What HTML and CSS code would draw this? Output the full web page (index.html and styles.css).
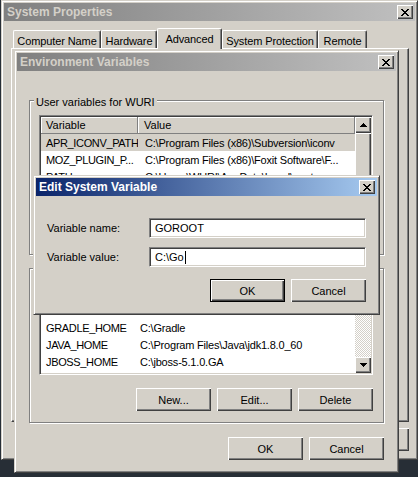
FILE: index.html
```html
<!DOCTYPE html>
<html>
<head>
<meta charset="utf-8">
<title>System Properties</title>
<link rel="stylesheet" href="styles.css">
</head>
<body>
<div class="desktop">

  <div class="win sysprops">
    <div class="titlebar inactive">
      <span class="title">System Properties</span>
      <span class="close"><svg width="8" height="7" viewBox="0 0 8 7" shape-rendering="crispEdges"><path d="M0 0h2v1h-2zM6 0h2v1h-2zM1 1h2v1h-2zM5 1h2v1h-2zM2 2h4v1h-4zM3 3h2v1h-2zM2 4h4v1h-4zM1 5h2v1h-2zM5 5h2v1h-2zM0 6h2v1h-2zM6 6h2v1h-2z" fill="#000"/></svg></span>
    </div>
    <div class="tabs">
      <div class="tab t-cn">Computer Name</div>
      <div class="tab t-hw">Hardware</div>
      <div class="tab t-adv selected">Advanced</div>
      <div class="tab t-sp">System Protection</div>
      <div class="tab t-rm">Remote</div>
    </div>
    <div class="tabpanel"></div>
    <div class="btnrow sp-buttons">
      <span class="btn">OK</span><span class="btn">Cancel</span><span class="btn">Apply</span>
    </div>
  </div>

  <div class="win envvars">
    <div class="titlebar inactive">
      <span class="title">Environment Variables</span>
      <span class="close"><svg width="8" height="7" viewBox="0 0 8 7" shape-rendering="crispEdges"><path d="M0 0h2v1h-2zM6 0h2v1h-2zM1 1h2v1h-2zM5 1h2v1h-2zM2 2h4v1h-4zM3 3h2v1h-2zM2 4h4v1h-4zM1 5h2v1h-2zM5 5h2v1h-2zM0 6h2v1h-2zM6 6h2v1h-2z" fill="#000"/></svg></span>
    </div>
    <div class="env-body">
      <div class="group">
        <span class="group-label">User variables for WURI</span>
        <div class="list">
          <div class="lv">
            <div class="lv-header"><div class="hcell c1">Variable</div><div class="hcell c2">Value</div></div>
            <div class="row sel"><div class="c1">APR_ICONV_PATH</div><div class="c2">C:\Program Files (x86)\Subversion\iconv</div></div>
            <div class="row"><div class="c1">MOZ_PLUGIN_P...</div><div class="c2">C:\Program Files (x86)\Foxit Software\F...</div></div>
            <div class="row"><div class="c1">PATH</div><div class="c2">C:\Users\WURI\AppData\Local\.meteor;</div></div>
            <div class="row"><div class="c1">TEMP</div><div class="c2">%USERPROFILE%\AppData\Local\Temp</div></div>
          </div>
          <div class="scrollbar">
            <span class="sbtn"><svg width="7" height="4" viewBox="0 0 7 4" shape-rendering="crispEdges"><path d="M3 0h1v1h1v1h1v1h1v1h-7v-1h1v-1h1v-1h1z" fill="#000"/></svg></span>
            <span class="thumb"></span>
            <span class="track"></span>
            <span class="sbtn"><svg width="7" height="4" viewBox="0 0 7 4" shape-rendering="crispEdges"><path d="M0 0h7v1h-1v1h-1v1h-1v1h-1v-1h-1v-1h-1v-1h-1z" fill="#000"/></svg></span>
          </div>
        </div>
        <div class="btnrow group-buttons">
          <span class="btn">New...</span><span class="btn">Edit...</span><span class="btn">Delete</span>
        </div>
      </div>

      <div class="group">
        <span class="group-label">System variables</span>
        <div class="list sys">
          <div class="lv">
            <div class="lv-header"><div class="hcell c1">Variable</div><div class="hcell c2">Value</div></div>
            <div class="row"><div class="c1">CLASSPATH</div><div class="c2">C:\Java\lib</div></div>
            <div class="row"><div class="c1">GRADLE_HOME</div><div class="c2">C:\Gradle</div></div>
            <div class="row"><div class="c1">JAVA_HOME</div><div class="c2">C:\Program Files\Java\jdk1.8.0_60</div></div>
            <div class="row"><div class="c1">JBOSS_HOME</div><div class="c2">C:\jboss-5.1.0.GA</div></div>
            <div class="row"><div class="c1">MAVEN_HOME</div><div class="c2">C:\apache-maven-3.3.9</div></div>
          </div>
          <div class="scrollbar">
            <span class="sbtn"><svg width="7" height="4" viewBox="0 0 7 4" shape-rendering="crispEdges"><path d="M3 0h1v1h1v1h1v1h1v1h-7v-1h1v-1h1v-1h1z" fill="#000"/></svg></span>
            <span class="thumb small"></span>
            <span class="track"></span>
            <span class="sbtn"><svg width="7" height="4" viewBox="0 0 7 4" shape-rendering="crispEdges"><path d="M0 0h7v1h-1v1h-1v1h-1v1h-1v-1h-1v-1h-1v-1h-1z" fill="#000"/></svg></span>
          </div>
        </div>
        <div class="btnrow group-buttons">
          <span class="btn">New...</span><span class="btn">Edit...</span><span class="btn">Delete</span>
        </div>
      </div>

      <div class="btnrow env-buttons">
        <span class="btn">OK</span><span class="btn">Cancel</span>
      </div>
    </div>
  </div>

  <div class="win editvar">
    <div class="titlebar active">
      <span class="title">Edit System Variable</span>
      <span class="close"><svg width="8" height="7" viewBox="0 0 8 7" shape-rendering="crispEdges"><path d="M0 0h2v1h-2zM6 0h2v1h-2zM1 1h2v1h-2zM5 1h2v1h-2zM2 2h4v1h-4zM3 3h2v1h-2zM2 4h4v1h-4zM1 5h2v1h-2zM5 5h2v1h-2zM0 6h2v1h-2zM6 6h2v1h-2z" fill="#000"/></svg></span>
    </div>
    <div class="edit-body">
      <div class="field">
        <span class="flabel">Variable name:</span>
        <span class="textbox">GOROOT</span>
      </div>
      <div class="field">
        <span class="flabel">Variable value:</span>
        <span class="textbox">C:\Go<span class="caret"></span></span>
      </div>
      <div class="btnrow edit-buttons">
        <span class="btn default">OK</span><span class="btn">Cancel</span>
      </div>
    </div>
  </div>

</div>
</body>
</html>
```

FILE: styles.css
```css
* { box-sizing: border-box; margin: 0; padding: 0; }

html, body { width: 418px; height: 477px; overflow: hidden; }

body {
  background: #272e36;
  font: 11px "Liberation Sans", Arial, sans-serif;
  color: #000;
}

.desktop { position: relative; width: 418px; height: 477px; }

/* classic window frame */
.win {
  position: absolute;
  background: #d4d0c8;
  border: 1px solid;
  border-color: #d4d0c8 #404040 #404040 #d4d0c8;
  box-shadow: inset 1px 1px #fff, inset -1px -1px #808080;
  padding: 2px;
  display: flex;
  flex-direction: column;
}

.sysprops { left: 1px; top: 0; width: 417px; height: 460px; }
.envvars { left: 14px; top: 50px; width: 385px; height: 423px; }
.editvar { left: 33px; top: 175px; width: 347px; height: 140px; }

.titlebar {
  flex: none;
  height: 18px;
  display: flex;
  align-items: center;
  justify-content: space-between;
  padding: 0 2px 0 3px;
}
.titlebar.inactive { background: linear-gradient(to right, #808080, #c0c0c0); color: #d4d0c8; }
.titlebar.active { background: linear-gradient(to right, #0a246a, #a6caf0); color: #fff; }
.title { font-weight: bold; font-size: 12px; white-space: nowrap; }

.close {
  width: 16px;
  height: 14px;
  display: flex;
  align-items: center;
  justify-content: center;
  background: #d4d0c8;
  box-shadow: inset 1px 1px #fff, inset -1px -1px #404040, inset -2px -2px #808080;
}
.close svg { display: block; margin-left: -1px; }

/* tabs */
.tabs {
  flex: none;
  position: relative;
  z-index: 1;
  display: flex;
  align-items: flex-end;
  height: 20px;
  margin: 7px 0 0 9px;
}
.tab {
  height: 18px;
  padding-top: 3px;
  display: flex;
  align-items: center;
  justify-content: center;
  white-space: nowrap;
  letter-spacing: -0.1px;
  background: #d4d0c8;
  border-top: 1px solid #fff;
  border-left: 1px solid #fff;
  border-right: 1px solid #404040;
  box-shadow: inset -1px 0 #808080;
  border-radius: 2px 2px 0 0;
}
.tab.selected { height: 21px; margin-bottom: -1px; padding-top: 0; }
.t-cn { width: 88px; }
.t-hw { width: 56px; }
.t-adv { width: 65px; }
.t-sp { width: 96px; }
.t-rm { width: 49px; }

.tabpanel {
  flex: none;
  margin-left: 7px;
  width: 398px;
  height: 374px;
  border: 1px solid;
  border-color: #fff #404040 #404040 #fff;
  box-shadow: inset -1px -1px #808080;
}

/* buttons */
.btnrow { display: flex; justify-content: flex-end; gap: 6px; flex: none; }
.btn {
  width: 75px;
  height: 23px;
  display: flex;
  align-items: center;
  justify-content: center;
  background: #d4d0c8;
  box-shadow: inset 1px 1px #fff, inset -1px -1px #404040, inset -2px -2px #808080;
  white-space: nowrap;
}
.btn.default { border: 1px solid #000; }
.sp-buttons { margin: 6px 6px 0 0; }

/* environment variables */
.env-body {
  display: flex;
  flex-direction: column;
  gap: 13px;
  padding: 29px 12px 0 12px;
}
.group {
  position: relative;
  height: 155px;
  border: 1px solid #808080;
  box-shadow: inset 1px 1px #fff, 1px 1px #fff;
  padding: 14px 10px 0 9px;
}
.group-label {
  position: absolute;
  top: -5px;
  left: 4px;
  padding: 0 2px;
  background: #d4d0c8;
  white-space: nowrap;
}
.group-buttons { margin-top: 13px; }
.env-buttons { margin-top: 1px; }

.list {
  height: 92px;
  display: flex;
  background: #fff;
  border: 1px solid;
  border-color: #808080 #fff #fff #808080;
  box-shadow: inset 1px 1px #404040, inset -1px -1px #d4d0c8;
  padding: 1px;
  overflow: hidden;
}
.lv { flex: 1; display: flex; flex-direction: column; overflow: hidden; min-width: 0; }
.lv-header { flex: none; display: flex; height: 17px; }
.hcell {
  display: flex;
  align-items: center;
  background: #d4d0c8;
  border-right: 1px solid #808080;
  border-bottom: 1px solid #808080;
  box-shadow: inset 1px 1px #fff;
}
.row { flex: none; display: flex; align-items: center; height: 17px; white-space: nowrap; }
.row.sel { background: #d4d0c8; }
.c1 { width: 97px; padding-left: 5px; flex: none; overflow: hidden; white-space: nowrap; letter-spacing: -0.35px; }
.c2 { flex: 1; padding-left: 7px; overflow: hidden; white-space: nowrap; letter-spacing: -0.2px; }
.hcell.c1 { padding-left: 5px; letter-spacing: 0; }
.hcell.c2 { padding-left: 6px; letter-spacing: 0; }
.sys .c1 { width: 92px; }

.scrollbar { width: 16px; flex: none; display: flex; flex-direction: column; }
.sbtn {
  flex: none;
  width: 16px;
  height: 16px;
  display: flex;
  align-items: center;
  justify-content: center;
  background: #d4d0c8;
  box-shadow: inset 1px 1px #fff, inset -1px -1px #404040, inset -2px -2px #808080;
}
.thumb {
  flex: none;
  height: 46px;
  background: #d4d0c8;
  box-shadow: inset 1px 1px #fff, inset -1px -1px #404040, inset -2px -2px #808080;
}
.thumb.small { height: 14px; }
.track {
  flex: 1;
  background: repeating-conic-gradient(#fff 0 25%, #d4d0c8 0 50%) 0 0 / 2px 2px;
}

/* edit dialog */
.edit-body { padding: 22px 11px 0 11px; }
.field { display: flex; align-items: center; height: 20px; }
.field + .field { margin-top: 9px; }
.flabel { width: 102px; flex: none; white-space: nowrap; }
.textbox {
  width: 217px;
  height: 20px;
  display: flex;
  align-items: center;
  padding-left: 5px;
  background: #fff;
  border: 1px solid;
  border-color: #808080 #fff #fff #808080;
  box-shadow: inset 1px 1px #404040, inset -1px -1px #d4d0c8;
  white-space: nowrap;
}
.caret { display: inline-block; width: 1px; height: 13px; background: #000; margin-left: 1px; }
.edit-buttons { margin-top: 12px; }
```
